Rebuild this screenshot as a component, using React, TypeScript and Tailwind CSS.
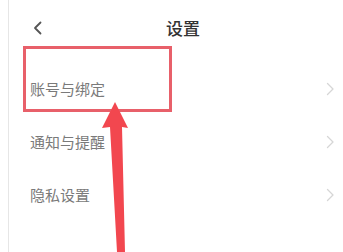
import React from "react";

function Chevron({ dir, className }: { dir: "left" | "right"; className?: string }) {
  return (
    <svg width="9" height="14" viewBox="0 0 9 14" className={className} fill="none">
      {dir === "left" ? (
        <polyline points="7.5,1.5 2,7 7.5,12.5" stroke="currentColor" strokeWidth="1.8" strokeLinecap="round" strokeLinejoin="round" />
      ) : (
        <polyline points="1.5,1.5 7,7 1.5,12.5" stroke="currentColor" strokeWidth="1.3" strokeLinecap="round" strokeLinejoin="round" />
      )}
    </svg>
  );
}

const rows = ["账号与绑定", "通知与提醒", "隐私设置"];

export default function App() {
  return (
    <div
      className="relative w-[343px] h-[252px] overflow-hidden bg-white flex"
      style={{ fontFamily: '"Noto Sans CJK SC", "Noto Sans", sans-serif' }}
    >
      <div className="w-[8px] shrink-0 bg-white" />
      <div className="flex-1 border-l border-[#e6e6e6] flex flex-col">
        <div className="h-[56px] flex items-center relative">
          <Chevron dir="left" className="ml-[24px] text-[#555555]" />
          <div className="absolute left-[157px] top-[17px] text-[17px] leading-[22px] font-medium text-[#333333]">
            设置
          </div>
        </div>
        <div className="mt-[6px] flex flex-col">
          {rows.map((r) => (
            <div key={r} className="h-[53px] flex items-center justify-between pl-[21px] pr-[8px]">
              <span className="text-[15px] leading-[20px] text-[#7a7a7a]">{r}</span>
              <Chevron dir="right" className="text-[#d6d6d6]" />
            </div>
          ))}
        </div>
      </div>

      {/* annotation box */}
      <div className="absolute left-[23px] top-[46px] w-[149px] h-[66px] border-[3px] border-[#e8606a]" />

      {/* annotation arrow */}
      <svg className="absolute left-0 top-0" width="343" height="252" viewBox="0 0 343 252">
        <polygon points="115,102 128,128 122,127 125,252 117,252 110,127 102,128" fill="#f2474f" />
      </svg>
    </div>
  );
}
